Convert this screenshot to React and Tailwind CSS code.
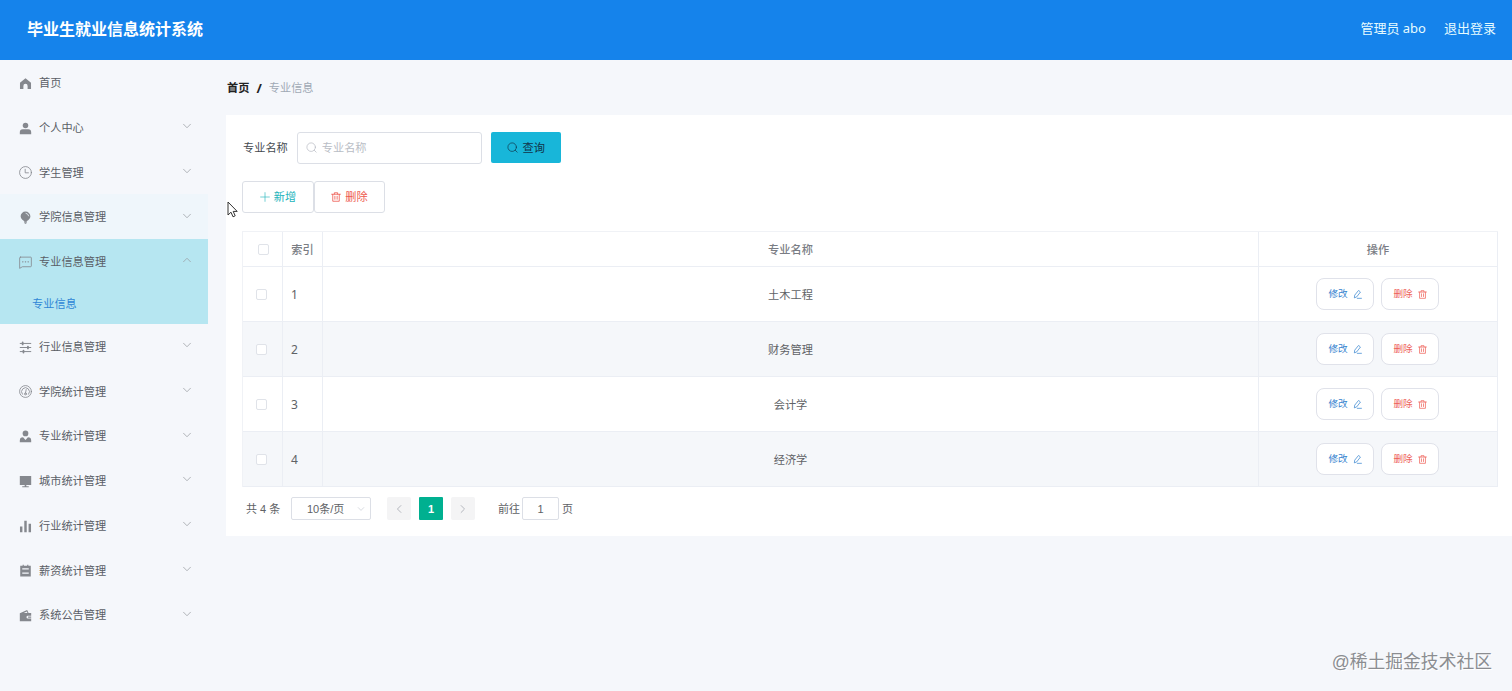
import React, { useState } from "react";

// --- ICONS ---
const Icon = ({ children, className = "w-3 h-3", width = 1 }) => (
    <svg viewBox="0 0 16 16" fill="none" stroke="currentColor" strokeWidth={width} strokeLinecap="round" strokeLinejoin="round" className={`shrink-0 ${className}`}>
        {children}
    </svg>
);

const MENU_ICONS = {
    home: <path d="M8 1.400 1.200 7v7.800H5.400V11a2.600 2.600 0 0 1 5.200 0v3.800h4.200V7z" fill="currentColor" stroke="none"/>,
    user: <g fill="currentColor" stroke="none"><circle cx="8" cy="4.2" r="3.4"/><path d="M1 15v-2.400A3.600 3.600 0 0 1 4.600 9h6.800a3.600 3.600 0 0 1 3.600 3.600V15z"/></g>,
    clock: <><circle cx="8" cy="8" r="7.3"/><path d="M7.6 4v4.4h4"/></>,
    bulb: <><path d="M8 .6a6 6 0 0 0-6 6c0 3 2.800 5.800 6 6.600 3.200-.8 6-3.600 6-6.600a6 6 0 0 0-6-6zM6 12.800h4l-.6 1.600H6.600zM7 14.800h2v1H7z" fill="currentColor" stroke="none"/><path d="M8.600 2.800a4 4 0 0 1 3.300 3.200" stroke="#eef6fc"/></>,
    chat: <><path d="M1.800 1.400h12.400a1 1 0 0 1 1 1v9.800a1 1 0 0 1-1 1H4.200L.8 15.200V2.400a1 1 0 0 1 1-1z"/><path d="M4.600 7.200h.2M7.900 7.200h.2M11.200 7.200h.2" strokeWidth="1.700"/></>,
    sliders: <><path d="M1.500 3h13M1.500 8h13M1.500 13h13" strokeWidth="1.200"/><path d="M4.500 1.800v2.400M11 6.800v2.400M5.500 11.800v2.400" strokeWidth="2.200"/></>,
    gauge: <><circle cx="8" cy="8" r="7.300"/><path d="M4.200 11.400a4.900 4.900 0 1 1 7.600 0M8.800 5.600 8 10"/><circle cx="7.900" cy="11" r="1.200"/></>,
    person: <g fill="currentColor" stroke="none"><circle cx="8" cy="4.200" r="3.500"/><path d="M1 15v-2.200a4 4 0 0 1 4-4l3 3.400 3-3.400a4 4 0 0 1 4 4V15z"/></g>,
    monitor: <path d="M1 1.200h14v11H9v1.600h3v1.200H4v-1.200h3v-1.600H1z" fill="currentColor" stroke="none"/>,
    bars: <path d="M1.200 8h3v7h-3zM6.500 1h3v14h-3zM11.800 4.600h3V15h-3z" fill="currentColor" stroke="none"/>,
    order: <path fillRule="evenodd" d="M1.500 2h3V.8h1.400V2h4.200V.8h1.400V2h3v13.400h-13zM4 6.800h8V5.200H4zM4 12h8v-1.600H4z" fill="currentColor" stroke="none"/>,
    wallet: <path fillRule="evenodd" d="M1 5.200 10 1.200l1.800 3.600H15v3.400h-4a1.800 1.800 0 0 0 0 3.600h4V15H1zM5.800 4.800h4.600l-.8-1.700zM11.200 9.200H15v1.600h-3.800z" fill="currentColor" stroke="none"/>,
};

const SearchIcon = ({ className }) => <Icon className={className}><circle cx="7.500" cy="7.500" r="6.200"/><path d="m12 12 2.800 2.800"/></Icon>;
const TrashIcon = ({ className }) => <Icon className={className} width={1.3}><path d="M1 3.600h14M5.400 3.400V1.200h5.200v2.200M2.800 3.800v11h10.400v-11M6.200 6.800v4.800M9.800 6.800v4.800"/></Icon>;
const EditIcon = ({ className }) => <Icon className={className} width={1.3}><path d="M9.500 1.200 3 9.200l-.6 4.800 4.200-1.800 6.200-8zM7.600 14.800h7.400"/></Icon>;
const Chevron = ({ up, className = "w-[10px] h-[10px]" }) => <Icon className={className} width={1.2}><path d={up ? "M2.500 10.800 8 5.200l5.500 5.600" : "M2.500 5.200 8 10.800l5.500-5.600"}/></Icon>;

// --- DATA ---
const MENU = [
    { name: "首页", icon: "home", leaf: true },
    { name: "个人中心", icon: "user" },
    { name: "学生管理", icon: "clock" },
    { name: "学院信息管理", icon: "bulb", hover: true },
    { name: "专业信息管理", icon: "chat", children: ["专业信息"] },
    { name: "行业信息管理", icon: "sliders" },
    { name: "学院统计管理", icon: "gauge" },
    { name: "专业统计管理", icon: "person" },
    { name: "城市统计管理", icon: "monitor" },
    { name: "行业统计管理", icon: "bars" },
    { name: "薪资统计管理", icon: "order" },
    { name: "系统公告管理", icon: "wallet" },
];

const MAJORS = ["土木工程", "财务管理", "会计学", "经济学"];

const Checkbox = ({ checked, onChange }) => (
    <button onClick={onChange} className={`block w-[11px] h-[11px] rounded-[2px] border border-[#e0e3e9] ${checked ? "bg-[#00b090]" : "bg-white"}`}/>
);

function Sidebar() {
    return (
        <aside className="w-[208px] shrink-0 text-[#5a5e66]">
            {MENU.map(item => (
                <div key={item.name} className={item.children ? "bg-[#b6e6f1]" : item.hover ? "bg-[#eff6fb]" : ""}>
                    <div className="h-[44.75px] pl-[19px] pr-4 flex items-center">
                        <Icon className="w-[13px] h-[13px] text-[#85888e] mt-0.5">{MENU_ICONS[item.icon]}</Icon>
                        <span className="ml-[7px] grow pt-[1.500px]">{item.name}</span>
                        {!item.leaf && <span className="text-[#9a9da3] mb-[2px]"><Chevron up={!!item.children}/></span>}
                    </div>
                    {item.children?.map(child => (
                        <div key={child} className="h-10 pl-8 flex items-center text-[#2f86d6]">{child}</div>
                    ))}
                </div>
            ))}
        </aside>
    );
}

function MajorTable() {
    const [selected, setSelected] = useState([]);
    const allSelected = selected.length === MAJORS.length;

    const toggle = (name) => {
        setSelected(selected.includes(name) ? selected.filter(n => n !== name) : [...selected, name]);
    };

    return (
        <table className="w-[1256px] table-fixed border-separate border-spacing-0 border-l border-t border-[#f0f2f6] text-[#606266] [&_td]:border-r [&_td]:border-b [&_td]:border-[#ebeef4] [&_th]:border-r [&_th]:border-b [&_th]:border-[#ebeef4] [&_td]:p-0 [&_th]:p-0">
            <colgroup>
                <col className="w-10"/>
                <col className="w-10"/>
                <col/>
                <col className="w-[239px]"/>
            </colgroup>
            <thead>
                <tr className="h-[35px] text-[#7a7d84]">
                    <th><div className="pl-[15px]"><Checkbox checked={allSelected} onChange={() => setSelected(allSelected ? [] : MAJORS)}/></div></th>
                    <th className="font-medium pt-0.5!">索引</th>
                    <th className="font-medium pt-0.5!">专业名称</th>
                    <th className="font-medium pt-0.5!">操作</th>
                </tr>
            </thead>
            <tbody>
                {MAJORS.map((name, i) => (
                    <tr key={name} className="h-[55px] even:bg-[#f5f7fa]">
                        <td><div className="pl-[13px]"><Checkbox checked={selected.includes(name)} onChange={() => toggle(name)}/></div></td>
                        <td className="pt-px!"><div className="pl-2 text-[12px]">{i + 1}</div></td>
                        <td className="text-center pt-px!">{name}</td>
                        <td>
                            <div className="flex justify-center gap-[7px] pr-px text-[9.600px]">
                                <button className="w-[58px] h-8 flex items-center justify-center gap-[5px] rounded-lg border border-[#e0e2ea] bg-white text-[#3583cf]">
                                    修改<EditIcon className="w-[9px] h-[9px]"/>
                                </button>
                                <button className="w-[58px] h-8 flex items-center justify-center gap-[5px] rounded-lg border border-[#e0e2ea] bg-white text-[#ee6258]">
                                    删除<TrashIcon className="w-[9px] h-[9px]"/>
                                </button>
                            </div>
                        </td>
                    </tr>
                ))}
            </tbody>
        </table>
    );
}

function Pagination() {
    return (
        <div className="mt-[10px] pl-1 flex items-center text-[11px] text-[#606266] font-['Liberation_Sans','Noto_Sans_CJK_SC',sans-serif]">
            <span className="w-[34px] whitespace-nowrap">共 4 条</span>
            <div className="ml-[11px] w-20 h-[23px] flex items-center rounded-[2px] border border-[#dcdfe6] pl-[15px] pr-[5px]">
                <span className="grow">10条/页</span>
                <span className="text-[#c0c4cc]"><Chevron className="w-2 h-2"/></span>
            </div>
            <button className="ml-4 w-6 h-[23px] flex items-center justify-center rounded-[2px] bg-[#f4f4f5] text-[#b4b7be]">
                <Icon className="w-[10px] h-[10px]" width={1.6}><path d="M11 2.500 5.500 8l5.500 5.500"/></Icon>
            </button>
            <button className="ml-2 w-6 h-[23px] rounded-[1px] bg-[#00b090] text-white font-bold">1</button>
            <button className="ml-2 w-6 h-[23px] flex items-center justify-center rounded-[2px] bg-[#f4f4f5] text-[#b4b7be]">
                <Icon className="w-[10px] h-[10px]" width={1.6}><path d="M5 2.500 10.500 8 5 13.500"/></Icon>
            </button>
            <span className="ml-[23px] w-[21px] whitespace-nowrap">前往</span>
            <span className="ml-[3px] w-[37px] h-[23px] flex items-center justify-center rounded-[2px] border border-[#dcdfe6]">1</span>
            <span className="ml-[3px]">页</span>
        </div>
    );
}

export default function App() {
    return (
        <div className="h-screen overflow-hidden relative flex flex-col bg-[#f5f7fb] text-[11.2px] leading-4 font-['Noto_Sans','Noto_Sans_CJK_SC',sans-serif]">
            {/* Header */}
            <header className="h-[60px] shrink-0 bg-[#1583eb] text-white flex items-center justify-between pl-[27px] pr-4 pb-[5px]">
                <h1 className="pt-0.5 text-[16px] leading-6 font-bold">毕业生就业信息统计系统</h1>
                <div className="flex gap-[18px] text-[13px] text-[#e6fbff]">
                    <span>管理员 abo</span>
                    <span>退出登录</span>
                </div>
            </header>

            <div className="flex grow">
                <Sidebar/>

                <main className="grow pl-[18px]">
                    <div className="h-[55px] flex items-center pl-px">
                        <span className="font-bold text-[#222]">首页</span>
                        <span className="mx-[7px] font-bold text-[#222] text-[13px]">/</span>
                        <span className="text-[#a0a9b5]">专业信息</span>
                    </div>

                    <section className="h-[421px] bg-white pl-4 pt-4">
                        {/* Search */}
                        <div className="h-[33px] flex items-center">
                            <span className="ml-px text-[#444950]">专业名称</span>
                            <label className="ml-[9px] w-[185px] h-8 flex items-center gap-[5px] rounded-[3px] border border-[#dcdfe6] px-2 text-[#b4b8c0]">
                                <SearchIcon className="w-[11px] h-[11px]"/>
                                <input placeholder="专业名称" className="w-full outline-none placeholder:text-[#b9bdc5]"/>
                            </label>
                            <button className="ml-[9px] w-[70px] h-[31px] flex items-center justify-center gap-[5px] rounded-[2px] bg-[#18b6d9] text-[#12344a]">
                                <SearchIcon className="w-[11px] h-[11px]"/>查询
                            </button>
                        </div>

                        {/* Actions */}
                        <div className="mt-[17px] flex">
                            <button className="w-[72px] h-8 flex items-center justify-center gap-1 rounded-[3px] border border-[#dcdfe6] text-[#22b3bb]">
                                <Icon className="w-[10px] h-[10px]"><path d="M8 1v14M1 8h14"/></Icon>新增
                            </button>
                            <button className="w-[71px] h-8 flex items-center justify-center gap-1 rounded-[3px] border border-[#dcdfe6] text-[#ee5a50]">
                                <TrashIcon className="w-[10px] h-[10px]"/>删除
                            </button>
                        </div>

                        <div className="mt-[18px]"><MajorTable/></div>
                        <Pagination/>
                    </section>
                </main>
            </div>

            {/* Mouse pointer */}
            <svg viewBox="0 0 12 18" className="absolute left-[227px] top-[201px] w-3 h-[18px]">
                <path d="M1 1v13l3-2.800 2 4.600 2.200-1-2-4.400h4z" fill="#fff" stroke="#333" strokeWidth="1"/>
            </svg>
            <div className="absolute right-5 bottom-[17px] text-[17.800px] leading-6 text-[#8b8d91] font-['Liberation_Sans','Noto_Sans_CJK_SC',sans-serif] [text-shadow:1px_1px_0_#fff]">@稀土掘金技术社区</div>
        </div>
    );
}
